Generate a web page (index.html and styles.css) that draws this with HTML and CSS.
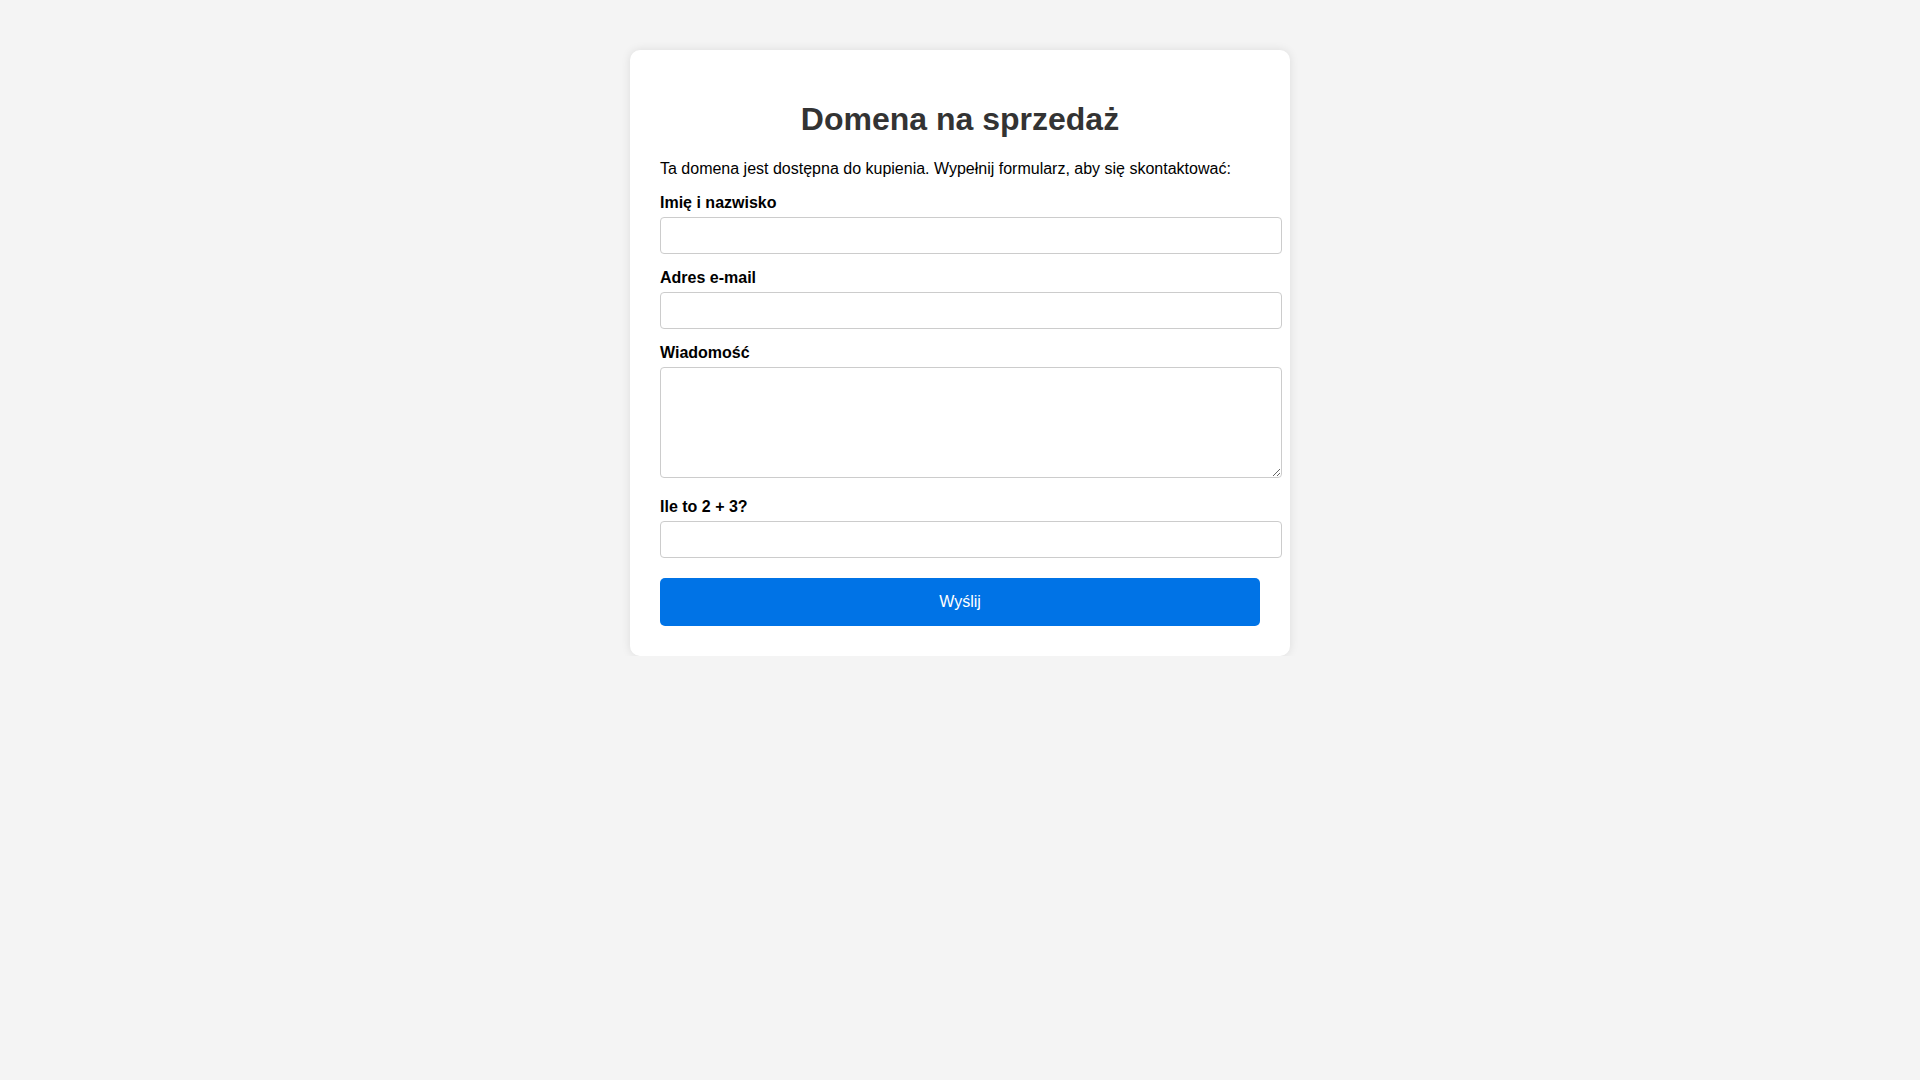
FILE: index.html
```html
<!DOCTYPE html>
<html lang="pl">
<head>
<meta charset="utf-8">
<title>Domena na sprzedaż</title>
<link rel="stylesheet" href="styles.css">
</head>
<body>
<div class="container">
  <h1 class="title">Domena na sprzedaż</h1>
  <p class="intro">Ta domena jest dostępna do kupienia. Wypełnij formularz, aby się skontaktować:</p>
  <form class="form">
    <label class="label" for="name">Imię i nazwisko</label>
    <input class="field" type="text" id="name">
    <label class="label" for="email">Adres e-mail</label>
    <input class="field" type="email" id="email">
    <label class="label" for="msg">Wiadomość</label>
    <textarea class="field area" id="msg"></textarea>
    <label class="label" for="captcha">Ile to 2 + 3?</label>
    <input class="field" type="text" id="captcha">
    <button class="submit" type="button">Wyślij</button>
  </form>
</div>
</body>
</html>
```

FILE: styles.css
```css
html, body {
  margin: 0;
  padding: 0;
}
body {
  background: #f4f4f4;
  font-family: "Liberation Sans", Arial, sans-serif;
  font-size: 16px;
  color: #000;
}
.container {
  width: 600px;
  margin: 50px auto 0;
  padding: 30px;
  background: #fff;
  border-radius: 10px;
  box-shadow: 0 0 10px rgba(0, 0, 0, 0.1);
}
.title {
  margin: 21.44px 0;
  font-size: 32px;
  font-weight: bold;
  color: #333;
  text-align: center;
}
.intro {
  margin: 16px 0;
}
.form {
  margin: 0;
}
.label {
  display: block;
  font-weight: bold;
  margin-bottom: 5px;
}
.field {
  display: block;
  width: 100%;
  padding: 10px;
  margin: 0 0 15.2px;
  border: 1px solid #ccc;
  border-radius: 4px;
  font-family: "Liberation Sans", Arial, sans-serif;
  font-size: 13.333px;
  background: #fff;
  box-sizing: content-box;
}
input.field {
  height: 15px;
}
.area {
  height: 89px;
  margin-bottom: 20px;
  resize: vertical;
}
.submit {
  display: block;
  width: 600px;
  margin-top: 20px;
  padding: 15px;
  border: none;
  border-radius: 5px;
  background: #0073e6;
  color: #fff;
  font-family: "Liberation Sans", Arial, sans-serif;
  font-size: 16px;
  line-height: 18px;
  cursor: pointer;
}
```
